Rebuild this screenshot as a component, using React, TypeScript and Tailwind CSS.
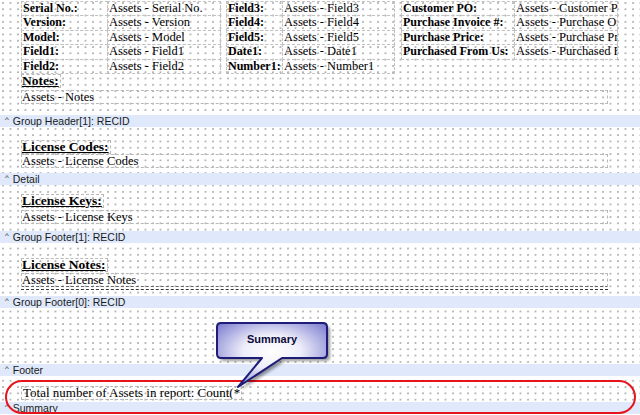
import type { ReactNode } from "react";

const SERIF = "font-['Liberation_Serif','Times_New_Roman',serif]";
const SANS = "font-['Liberation_Sans',Arial,sans-serif]";

const COLUMNS = [
  {
    labelWidth: "w-[87px]",
    valueWidth: "w-[114px]",
    rows: [
      ["Serial No.:", "Assets - Serial No."],
      ["Version:", "Assets - Version"],
      ["Model:", "Assets - Model"],
      ["Field1:", "Assets - Field1"],
      ["Field2:", "Assets - Field2"],
    ],
  },
  {
    labelWidth: "w-[57px]",
    valueWidth: "w-[113px]",
    rows: [
      ["Field3:", "Assets - Field3"],
      ["Field4:", "Assets - Field4"],
      ["Field5:", "Assets - Field5"],
      ["Date1:", "Assets - Date1"],
      ["Number1:", "Assets - Number1"],
    ],
  },
  {
    labelWidth: "w-[114px]",
    valueWidth: "w-[104px]",
    rows: [
      ["Customer PO:", "Assets - Customer PO"],
      ["Purchase Invoice #:", "Assets - Purchase Order"],
      ["Purchase Price:", "Assets - Purchase Price"],
      ["Purchased From Us:", "Assets - Purchased From Us"],
    ],
  },
];

function Band({ label }: { label: string }) {
  return (
    <div
      className={`flex h-[12px] items-center bg-[#dfe9fb] pl-[5px] text-[10.5px] leading-none text-[#1a1a1a] ${SANS}`}
    >
      <span className="mr-[4px] -mt-[2px] text-[8px] leading-none">^</span>
      {label}
    </div>
  );
}

function Cell({
  width,
  bold,
  children,
}: {
  width: string;
  bold?: boolean;
  children: ReactNode;
}) {
  return (
    <div
      className={`-mt-px -ml-px h-[15.4px] shrink-0 overflow-hidden whitespace-nowrap border border-dashed border-[#c2c2c2] pl-[1px] leading-[13px] text-black ${width} ${
        bold ? "text-[12px] font-bold" : "text-[12.5px]"
      }`}
    >
      {children}
    </div>
  );
}

function FieldLabel({ children }: { children: ReactNode }) {
  return (
    <div
      className={`ml-[21px] h-[14px] w-fit border border-dashed border-[#b8b8b8] pr-[1px] text-[13.5px] font-bold leading-[12px] text-black underline decoration-1 underline-offset-1 ${SERIF}`}
    >
      {children}
    </div>
  );
}

function FieldValue({ children, dark }: { children: ReactNode; dark?: boolean }) {
  return (
    <div
      className={`ml-[21px] h-[14px] w-[587px] border border-dashed border-[#b8b8b8] text-[12.5px] leading-[12px] text-black ${SERIF} ${
        dark ? "border-b-[#666]" : ""
      }`}
    >
      {children}
    </div>
  );
}

export default function App() {
  return (
    <div
      className={`relative h-[415px] w-[640px] overflow-hidden bg-white bg-[radial-gradient(circle_at_1px_1px,#b0b0b0_0.7px,transparent_0.9px)] bg-[length:7.5px_6.3px] bg-[position:2px_2px] ${SERIF}`}
    >
      <div className="flex h-[115px] flex-col pt-[2px]">
        <div className="flex pl-[22px]">
          {COLUMNS.map((column, index) => (
            <div
              key={index}
              className={`flex ${index === 1 ? "ml-[6px]" : ""} ${index === 2 ? "ml-[7px]" : ""}`}
            >
              <div className="flex flex-col">
                {column.rows.map(([label]) => (
                  <Cell key={label} width={column.labelWidth} bold>
                    {label}
                  </Cell>
                ))}
              </div>
              <div className="flex flex-col">
                {column.rows.map(([label, value]) => (
                  <Cell key={label} width={column.valueWidth}>
                    {value}
                  </Cell>
                ))}
              </div>
            </div>
          ))}
        </div>
        <FieldLabel>Notes:</FieldLabel>
        <div className="mt-[2px]">
          <FieldValue>Assets - Notes</FieldValue>
        </div>
      </div>

      <Band label="Group Header[1]: RECID" />
      <div className="flex h-[46px] flex-col pt-[13px]">
        <FieldLabel>License Codes:</FieldLabel>
        <FieldValue>Assets - License Codes</FieldValue>
      </div>

      <Band label="Detail" />
      <div className="flex h-[46px] flex-col pt-[9px]">
        <FieldLabel>License Keys:</FieldLabel>
        <div className="mt-[2px]">
          <FieldValue>Assets - License Keys</FieldValue>
        </div>
      </div>

      <Band label="Group Footer[1]: RECID" />
      <div className="flex h-[53px] flex-col pt-[15px]">
        <FieldLabel>License Notes:</FieldLabel>
        <div className="mt-[1px]">
          <FieldValue dark>Assets - License Notes</FieldValue>
        </div>
        <div className="ml-[21px] mt-[2px] w-[587px] border-t border-dashed border-[#333]" />
      </div>

      <Band label="Group Footer[0]: RECID" />
      <div className="h-[56px]" />

      <Band label="Footer" />
      <div className="flex h-[26px] flex-col pt-[10px]">
        <div className="ml-[21px] h-[14px] w-[221px] overflow-hidden whitespace-nowrap border border-dashed border-[#b8b8b8] pl-[1px] text-[13px] leading-[12px] text-black">
          Total number of Assets in report: Count(*)
        </div>
      </div>
      <Band label="Summary" />

      <div className="pointer-events-none absolute left-[5px] top-[380px] h-[34px] w-[631px] rounded-[17px] border-2 border-[#e8141c]" />

      <svg
        className="absolute left-[210px] top-[318px]"
        width="130"
        height="75"
        viewBox="0 0 130 75"
      >
        <defs>
          <radialGradient id="callout" cx="50%" cy="45%" r="65%">
            <stop offset="0%" stopColor="#ffffff" />
            <stop offset="40%" stopColor="#eeeefa" />
            <stop offset="100%" stopColor="#7c7cd0" />
          </radialGradient>
          <filter id="shade" x="-20%" y="-20%" width="140%" height="140%">
            <feGaussianBlur stdDeviation="1.5" />
          </filter>
        </defs>
        <path
          d="M11 5 H113 Q117 5 117 9 V36 Q117 40 113 40 H72 L28 69 L52 40 H11 Q7 40 7 36 V9 Q7 5 11 5 Z"
          transform="translate(3 3)"
          fill="#000"
          opacity="0.4"
          filter="url(#shade)"
        />
        <path
          d="M11 5 H113 Q117 5 117 9 V36 Q117 40 113 40 H72 L28 69 L52 40 H11 Q7 40 7 36 V9 Q7 5 11 5 Z"
          fill="url(#callout)"
          stroke="#1d1d78"
          strokeWidth="2"
          strokeLinejoin="round"
        />
        <text
          x="62"
          y="25"
          textAnchor="middle"
          fontFamily="Liberation Sans, Arial, sans-serif"
          fontSize="11"
          fontWeight="bold"
          fill="#0b0b3a"
        >
          Summary
        </text>
      </svg>
    </div>
  );
}
